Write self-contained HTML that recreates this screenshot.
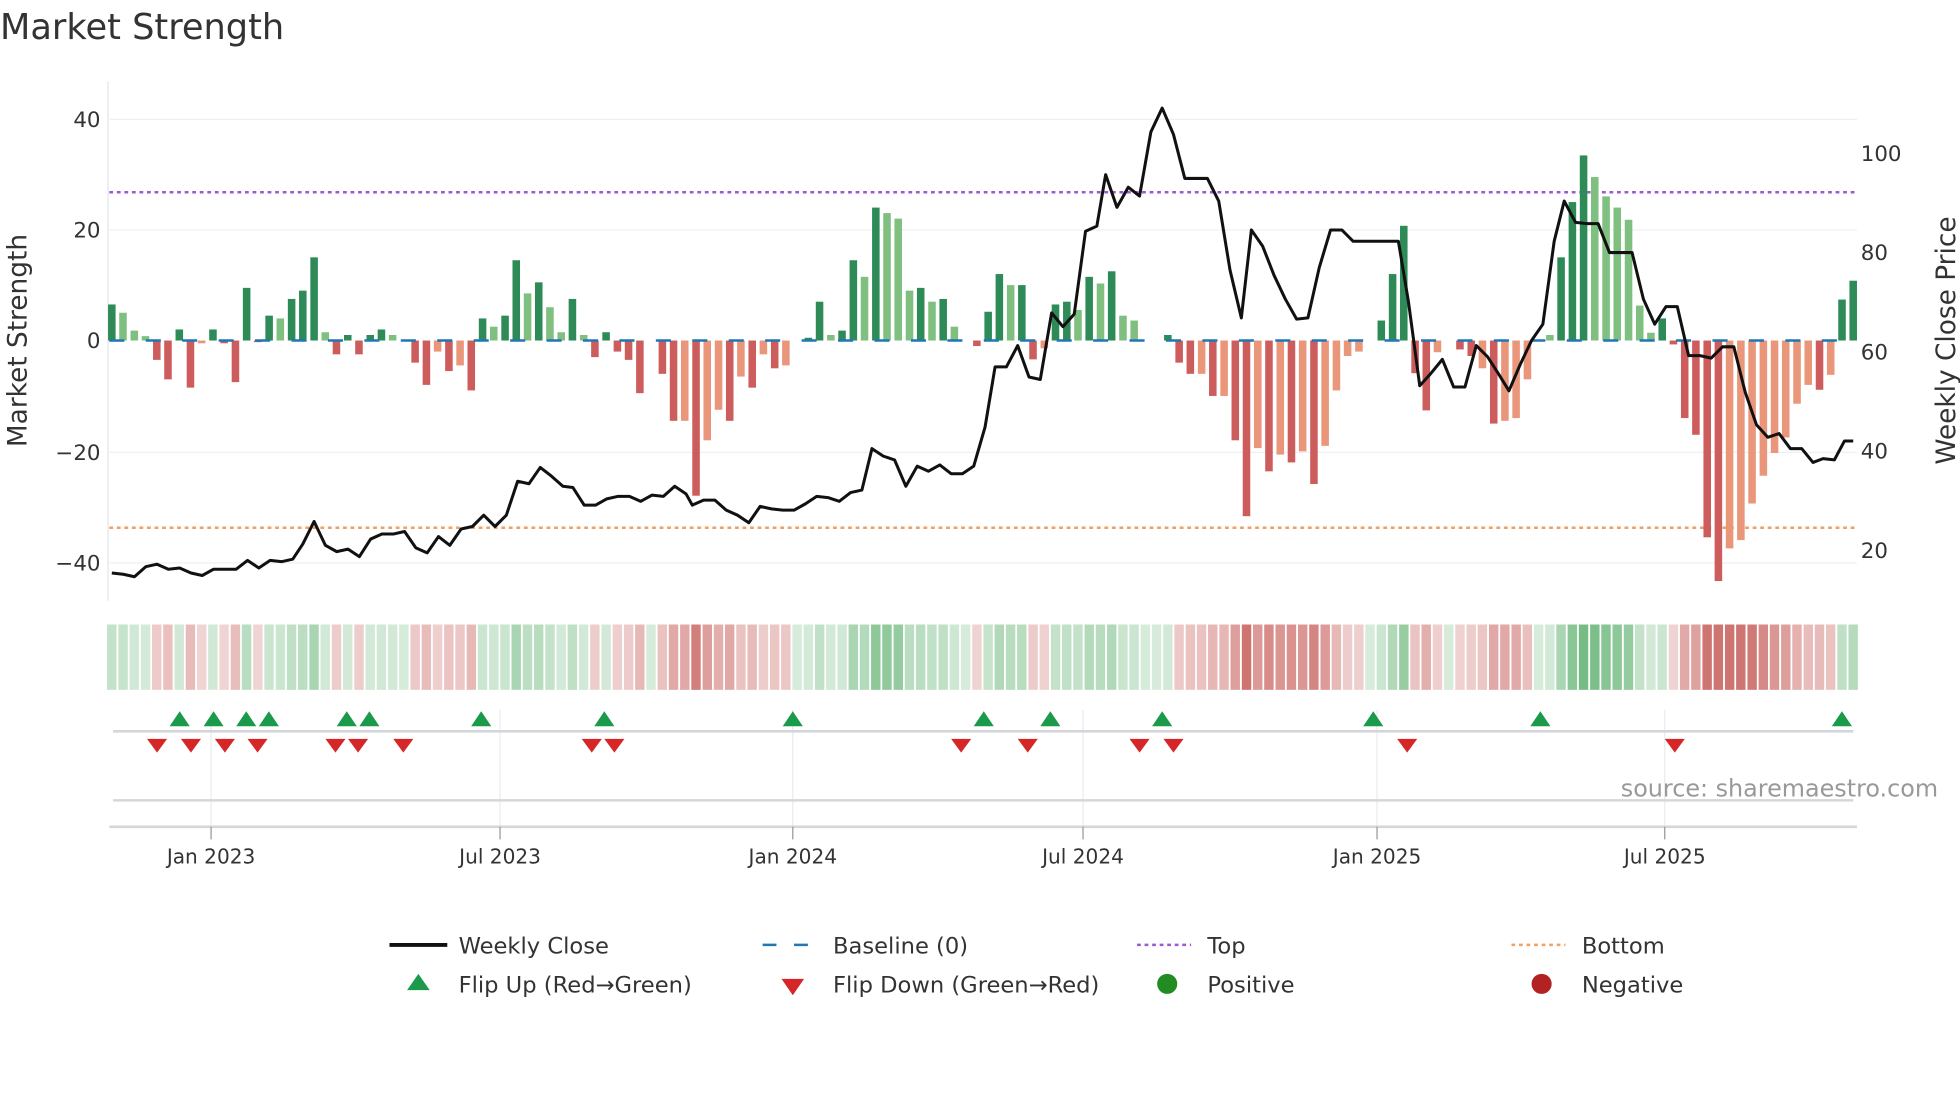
<!DOCTYPE html>
<html><head><meta charset="utf-8"><style>
html,body{margin:0;padding:0;background:#fff;}
svg{display:block;font-family:"DejaVu Sans","Liberation Sans",sans-serif;}
</style></head><body>
<svg id="s" width="1960" height="1102" viewBox="0 0 1560 877" preserveAspectRatio="none" xmlns="http://www.w3.org/2000/svg">
<rect width="1560" height="877" fill="#fff"/>
<text x="0" y="31" font-size="28" fill="#333">Market Strength</text>
<g stroke="#edf0f5" stroke-width="1">
<line x1="87" y1="95" x2="1478" y2="95"/><line x1="87" y1="183" x2="1478" y2="183"/>
<line x1="87" y1="360" x2="1478" y2="360"/><line x1="87" y1="448" x2="1478" y2="448"/>
</g>
<line x1="86" y1="65" x2="86" y2="478" stroke="#e4e6ea" stroke-width="1"/>
<g font-size="17" fill="#333" text-anchor="end">
<text x="80" y="101">40</text><text x="80" y="189">20</text><text x="80" y="277">0</text>
<text x="80" y="366">−20</text><text x="80" y="454">−40</text>
</g>
<g font-size="17" fill="#333">
<text x="1481" y="128">100</text><text x="1481" y="207">80</text><text x="1481" y="286">60</text>
<text x="1481" y="365">40</text><text x="1481" y="444">20</text>
</g>
<text transform="translate(21,271) rotate(-90)" text-anchor="middle" font-size="21" fill="#333">Market Strength</text>
<text transform="translate(1556,271) rotate(-90)" text-anchor="middle" font-size="21" fill="#333">Weekly Close Price</text>
<line x1="87" y1="153" x2="1478" y2="153" stroke="#9b59d6" stroke-width="2" stroke-dasharray="3 3"/>
<line x1="87" y1="420" x2="1478" y2="420" stroke="#f0a060" stroke-width="2" stroke-dasharray="3 3"/>
<g id="bars"></g>
<line x1="87" y1="271" x2="1478" y2="271" stroke="#1f77b4" stroke-width="2" stroke-dasharray="12 17"/>
<polyline id="price" fill="none" stroke="#111" stroke-width="2.4" stroke-linejoin="round"/>
<g id="heat"></g>
<g stroke="#e8ebf0" stroke-width="1">
<line x1="168" y1="565" x2="168" y2="658"/><line x1="398" y1="565" x2="398" y2="658"/>
<line x1="631" y1="565" x2="631" y2="658"/><line x1="862" y1="565" x2="862" y2="658"/>
<line x1="1096" y1="565" x2="1096" y2="658"/><line x1="1325" y1="565" x2="1325" y2="658"/>
</g>
<line x1="90" y1="582" x2="1475" y2="582" stroke="#d4d6da" stroke-width="2"/>
<line x1="90" y1="637" x2="1475" y2="637" stroke="#d4d6da" stroke-width="2"/>
<line x1="87" y1="658" x2="1478" y2="658" stroke="#d4d6da" stroke-width="2"/>
<g stroke="#999" stroke-width="1">
<line x1="168" y1="658" x2="168" y2="668"/><line x1="398" y1="658" x2="398" y2="668"/>
<line x1="631" y1="658" x2="631" y2="668"/><line x1="862" y1="658" x2="862" y2="668"/>
<line x1="1096" y1="658" x2="1096" y2="668"/><line x1="1325" y1="658" x2="1325" y2="668"/>
</g>
<g font-size="16" fill="#333" text-anchor="middle">
<text x="168" y="687">Jan 2023</text><text x="398" y="687">Jul 2023</text><text x="631" y="687">Jan 2024</text>
<text x="862" y="687">Jul 2024</text><text x="1096" y="687">Jan 2025</text><text x="1325" y="687">Jul 2025</text>
</g>
<g id="tri"></g>
<text x="1290" y="634" font-size="19" fill="#999">source: sharemaestro.com</text>
<g font-size="18" fill="#333">
<line x1="310" y1="752" x2="356" y2="752" stroke="#111" stroke-width="3"/>
<text x="365" y="759">Weekly Close</text>
<line x1="607" y1="752" x2="650" y2="752" stroke="#1f77b4" stroke-width="2" stroke-dasharray="11 14"/>
<text x="663" y="759">Baseline (0)</text>
<line x1="905" y1="752" x2="948" y2="752" stroke="#9b59d6" stroke-width="2" stroke-dasharray="3 3"/>
<text x="961" y="759">Top</text>
<line x1="1203" y1="752" x2="1246" y2="752" stroke="#f0a060" stroke-width="2" stroke-dasharray="3 3"/>
<text x="1259" y="759">Bottom</text>
<polygon points="324,788 342,788 333,775" fill="#1a9a4a"/>
<text x="365" y="790">Flip Up (Red→Green)</text>
<polygon points="622,779 640,779 631,792" fill="#d62728"/>
<text x="663" y="790">Flip Down (Green→Red)</text>
<circle cx="929" cy="783" r="8" fill="#228b22"/>
<text x="961" y="790">Positive</text>
<circle cx="1227" cy="783" r="8" fill="#b22222"/>
<text x="1259" y="790">Negative</text>
</g>
</svg>
<script>
var D=[[6.5,'g'],[5,'l'],[1.8,'l'],[0.8,'l'],[-3.5,'r'],[-7,'r'],[2,'g'],[-8.5,'r'],[-0.5,'s'],[2,'g'],[-0.5,'r'],[-7.5,'r'],[9.5,'g'],[-0.3,'r'],[4.5,'g'],[4,'l'],[7.5,'g'],[9,'g'],[15,'g'],[1.5,'l'],[-2.5,'r'],[1,'g'],[-2.5,'r'],[1,'g'],[2,'g'],[1,'l'],[0,'g'],[-4,'r'],[-8,'r'],[-2,'s'],[-5.5,'r'],[-4.5,'s'],[-9,'r'],[4,'g'],[2.5,'l'],[4.5,'g'],[14.5,'g'],[8.5,'l'],[10.5,'g'],[6,'l'],[1.5,'l'],[7.5,'g'],[1,'l'],[-3,'r'],[1.5,'g'],[-2,'r'],[-3.5,'r'],[-9.5,'r'],[0,'r'],[-6,'r'],[-14.5,'r'],[-14.5,'s'],[-28,'r'],[-18,'s'],[-12.5,'s'],[-14.5,'r'],[-6.5,'s'],[-8.5,'r'],[-2.5,'s'],[-5,'r'],[-4.5,'s'],[0,'r'],[0.5,'g'],[7,'g'],[1,'l'],[1.8,'g'],[14.5,'g'],[11.5,'l'],[24,'g'],[23,'l'],[22,'l'],[9,'l'],[9.5,'g'],[7,'l'],[7.5,'g'],[2.5,'l'],[0,'g'],[-1,'r'],
[5.2,'g'],[12,'g'],[10,'l'],[10,'g'],[-3.4,'r'],[-1.4,'s'],[6.5,'g'],[7,'g'],[5.5,'l'],[11.5,'g'],[10.3,'l'],[12.5,'g'],[4.5,'l'],[3.6,'l'],[0,'g'],[0,'g'],[1,'g'],[-4,'r'],[-6,'r'],[-6,'s'],[-10,'r'],[-10,'s'],[-18,'r'],[-31.7,'r'],[-19.4,'s'],[-23.6,'r'],[-20.6,'s'],[-22,'r'],[-20,'s'],[-25.9,'r'],[-19,'s'],[-9,'s'],[-2.8,'s'],[-2,'s'],[0,'g'],[3.6,'g'],[12,'g'],[20.7,'g'],[-5.9,'r'],[-12.6,'r'],[-2.1,'s'],[0,'r'],[-1.6,'r'],[-2.8,'r'],[-5,'s'],[-15,'r'],[-14.5,'s'],[-14,'s'],[-7,'s'],[0,'g'],[1,'l'],[15,'g'],[25,'g'],[33.4,'g'],[29.5,'l'],[26,'l'],[24,'l'],[21.8,'l'],[6.3,'l'],[1.4,'l'],[4,'g'],[-0.7,'r'],[-14,'r'],[-17,'r'],[-35.5,'r'],[-43.4,'r'],[-37.5,'s'],[-36,'s'],[-29.4,'s'],[-24.4,'s'],[-20.3,'s'],[-17.5,'s'],[-11.4,'s'],[-8,'s'],[-8.9,'r'],[-6.2,'s'],[7.4,'g'],[10.8,'g']];
var C={g:'#2e8b57',l:'#7fbf7f',r:'#cd5c5c',s:'#e9967a'};
var n=D.length,sp=(1475-89)/(n-1);
var bars=document.getElementById('bars'),heat=document.getElementById('heat'),h='',hh='';
for(var i=0;i<n;i++){var v=D[i][0],x=89+i*sp,y0=271,y1=271-v*4.41;
 if(v!==0)h+='<rect x="'+(x-3).toFixed(1)+'" y="'+Math.min(y0,y1).toFixed(1)+'" width="6" height="'+Math.abs(y1-y0).toFixed(1)+'" fill="'+C[D[i][1]]+'"/>';
 var a=Math.min(1,0.3+Math.abs(v)/45);var col=v>=0?'rgba(60,160,80,'+(a*0.7).toFixed(2)+')':'rgba(190,70,65,'+(a*0.75).toFixed(2)+')';
 hh+='<rect x="'+(x-sp/2+0.7).toFixed(1)+'" y="497" width="'+(sp-1.4).toFixed(1)+'" height="52" fill="'+col+'"/>';}
bars.innerHTML=h;heat.innerHTML=hh;
var P="89,456 98,457 107,459 116,451 125,449 134,453 143,452 152,456 161,458 170,453 179,453 188,453 197,446 206,452 215,446 224,447 233,445 241,433 250,415 259,434 268,439 277,437 286,443 295,429 304,425 313,425 322,423 331,436 340,440 349,427 358,434 367,421 376,419 385,410 394,419 403,410 412,383 421,385 430,372 439,379 448,387 456,388 465,402 474,402 483,397 492,395 501,395 510,399 519,394 528,395 537,387 546,393 551,402 560,398 569,398 578,406 587,410 596,416 605,403 614,405 623,406 632,406 641,401 650,395 659,396 668,399 677,392 686,390 694,357 703,363 712,366 721,387 730,371 739,375 748,370 757,377 766,377 775,371 784,340 792,292 801,292 810,275 819,300 828,302 837,249 846,260 855,250 864,184 873,180 880,139 889,165 898,149 907,156 916,105 925,86 934,107 943,142 952,142 961,142 970,160 979,215 988,253 996,183 1005,196 1014,219 1023,238 1032,254 1041,253 1050,213 1059,183 1068,183 1077,192 1086,192 1095,192 1104,192 1113,192 1121,240 1130,307 1139,297 1148,286 1157,308 1166,308 1175,275 1184,284 1193,298 1201,311 1210,290 1219,271 1228,258 1237,192 1245,160 1254,177 1263,178 1272,178 1281,201 1290,201 1299,201 1308,238 1317,258 1326,244 1335,244 1344,283 1353,283 1362,285 1371,276 1380,276 1389,312 1398,338 1407,348 1416,345 1425,357 1434,357 1443,368 1451,365 1460,366 1468,351 1475,351";
document.getElementById('price').setAttribute('points',P);
var up=[143,170,196,214,276,294,383,481,631,783,836,925,1093,1226,1466],dn=[125,152,179,205,267,285,321,471,489,765,818,907,934,1120,1333],t='';
up.forEach(function(x){t+='<polygon points="'+(x-8)+',578 '+(x+8)+',578 '+x+',566" fill="#1a9a4a"/>';});
dn.forEach(function(x){t+='<polygon points="'+(x-8)+',588 '+(x+8)+',588 '+x+',599" fill="#d62728"/>';});
document.getElementById('tri').innerHTML=t;
</script>
</body></html>
